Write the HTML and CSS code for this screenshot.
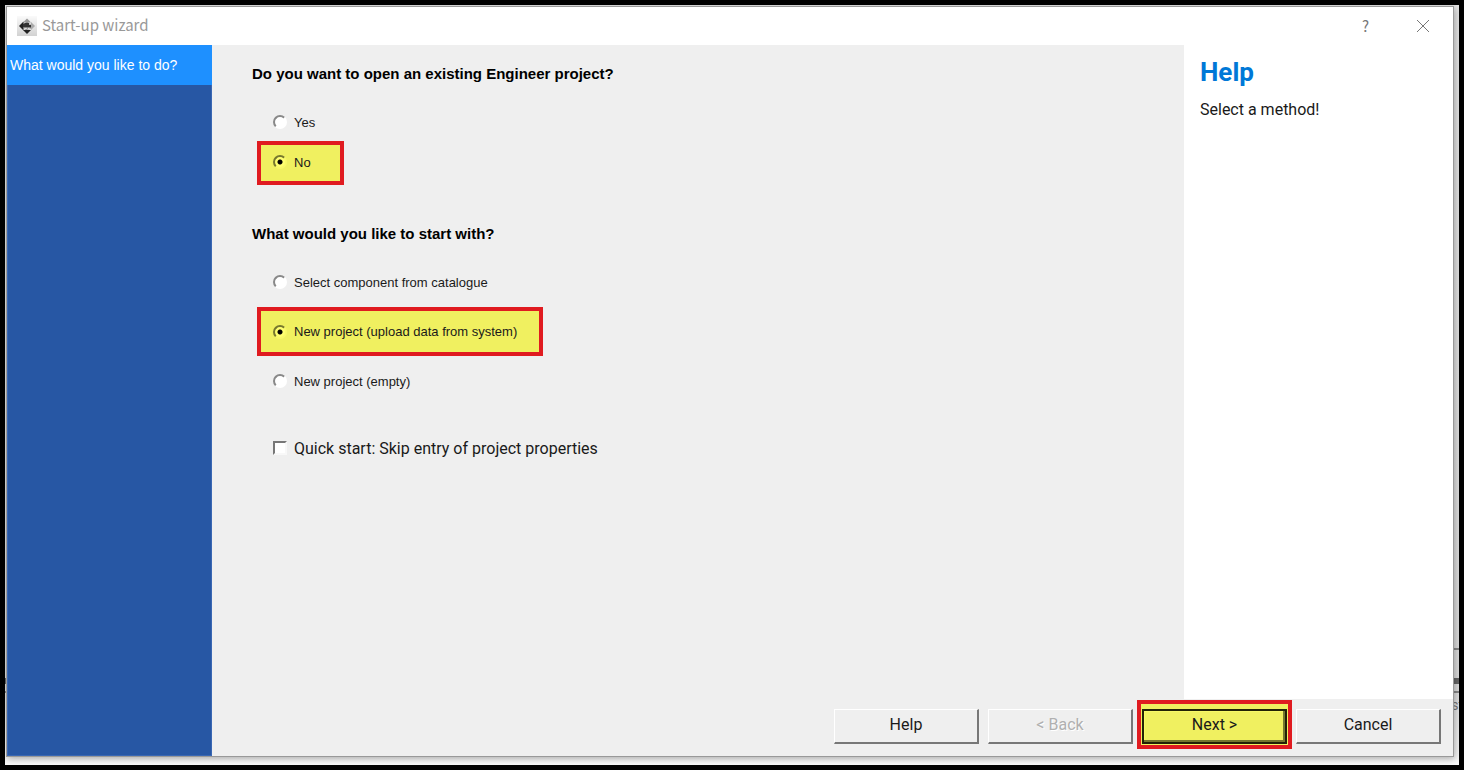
FILE: index.html
```html
<!DOCTYPE html>
<html lang="en">
<head>
<meta charset="utf-8">
<title>Start-up wizard</title>
<link rel="stylesheet" href="styles.css">
</head>
<body>
<div class="desktop">
  <div class="backdrop" aria-hidden="true">
    <span class="rule rule-top"></span>
    <span class="rule rule-thick"></span>
    <span class="rule rule-low"></span>
    <span class="backdrop-text">st</span>
  </div>
  <section class="window">
    <header class="titlebar">
      <svg class="app-icon" width="20" height="20" viewBox="0 0 20 20">
        <defs>
          <linearGradient id="tile" x1="0" y1="0" x2="0" y2="1">
            <stop offset="0" stop-color="#fafafa"/><stop offset="1" stop-color="#d2d2d2"/>
          </linearGradient>
        </defs>
        <rect width="20" height="20" fill="url(#tile)"/>
        <path d="M10 2.5 14 6.5H6z" fill="#999"/>
        <path d="M18 10 14 6v8z" fill="#aaa"/>
        <path d="M10 18 6 14h8z" fill="#222"/>
        <path d="M2 10 6.500 5.500v9z" fill="#222"/>
        <path d="M6 8q4-3 8 0v4q-4 3-8 0z" fill="#333"/>
        <path d="M6 11.500h5l-1.500 1.500h-2zM11 11.500h3l-2 2h-2z" fill="#ddd"/>
        <circle cx="13" cy="8" r="1" fill="#eee"/>
      </svg>
      <h1 class="title">Start-up wizard</h1>
      <button class="title-button" type="button" aria-label="Help topics">?</button>
      <button class="title-button" type="button" aria-label="Close">
        <svg width="12" height="12" viewBox="0 0 12 12"><path d="M0 0 12 12M12 0 0 12" stroke="#777" fill="none"/></svg>
      </button>
    </header>
    <div class="content">
      <nav class="steps">
        <a class="step" href="#start">What would you like to do?</a>
      </nav>
      <form class="wizard" id="start">
        <div class="questions">
          <fieldset class="group">
            <legend class="question">Do you want to open an existing Engineer project?</legend>
            <label class="option"><input class="radio" type="radio" name="open">Yes</label>
            <label class="option marked"><input class="radio" type="radio" name="open" checked>No</label>
          </fieldset>
          <fieldset class="group roomy">
            <legend class="question">What would you like to start with?</legend>
            <label class="option"><input class="radio" type="radio" name="source">Select component from catalogue</label>
            <label class="option marked"><input class="radio" type="radio" name="source" checked>New project (upload data from system)</label>
            <label class="option"><input class="radio" type="radio" name="source">New project (empty)</label>
          </fieldset>
          <label class="option quick"><input class="check" type="checkbox">Quick start: Skip entry of project properties</label>
        </div>
        <aside class="help">
          <h2 class="help-title">Help</h2>
          <p class="help-text">Select a method!</p>
        </aside>
        <footer class="actions">
          <button class="button first" type="button">Help</button>
          <button class="button" type="button" disabled>&lt; Back</button>
          <span class="marked-button"><button class="button default" type="button">Next &gt;</button></span>
          <button class="button" type="button">Cancel</button>
        </footer>
      </form>
    </div>
  </section>
</div>
</body>
</html>
```
FILE: styles.css
```css
* { box-sizing: border-box; }

body {
  margin: 0;
  background: #000;
  color: #1a1a1a;
  font-family: Roboto, "Liberation Sans", sans-serif;
  font-size: 16px;
}

.desktop {
  position: relative;
  display: flex;
  min-height: 100vh;
  padding: 6px 10px 13px 6px;
}

.backdrop {
  position: absolute;
  inset: 5px;
  overflow: hidden;
  background: linear-gradient(#e4e4e4, #dcdcdc 90%, #fafafa);
}

.rule { position: absolute; left: 0; right: 0; height: 2px; background: #888; }
.rule-top { left: auto; width: 8px; bottom: 115px; }
.rule-thick { bottom: 81px; height: 6px; background: #666; }
.rule-low { bottom: 72px; }
.backdrop-text { position: absolute; right: -4px; bottom: 52px; color: #777; font-size: 14px; }

.window {
  position: relative;
  display: flex;
  flex: 1;
  flex-direction: column;
  border: 1px solid #999;
  background: #fff;
  box-shadow: 1px 2px 7px rgba(0, 0, 0, .3);
}

.titlebar { display: flex; align-items: center; height: 38px; padding: 0 2px 0 10px; }
.title {
  flex: 1;
  margin: 0 0 0 5px;
  padding-bottom: 2px;
  color: #999;
  font: 400 15px/22px "Noto Sans CJK KR", sans-serif;
}
.title-button {
  display: grid;
  place-items: center;
  width: 57px;
  height: 38px;
  padding: 0;
  border: 0;
  background: none;
  color: #777;
  font: 400 15px/22px "Noto Sans CJK KR", sans-serif;
}

.content { display: flex; flex: 1; }
.steps { flex: 0 0 205px; border: 1px solid #3a68b4; border-top: 0; background: #2757a4; }
.step {
  display: block;
  margin: 0 -1px;
  padding: 0 3px;
  background: #1e90ff;
  color: #fff;
  font: 14px/40px "Liberation Sans", Arial, sans-serif;
  text-decoration: none;
}

.wizard {
  display: grid;
  flex: 1;
  grid-template: 1fr 57px / 1fr 269px;
  background: #efefef;
}
.questions { padding: 18px 40px; }
.group { min-width: 0; margin: 0 0 38px; padding: 0; border: 0; }
.question {
  padding: 0;
  color: #000;
  font: 700 15px/22px "Liberation Sans", Arial, sans-serif;
}
.group .option:first-of-type { margin-top: 18px; }
.group.roomy { margin: 0 0 22px; }
.group.roomy .option:first-of-type { margin-top: 12px; }

.option {
  display: flex;
  align-items: center;
  width: fit-content;
  height: 38px;
  margin-left: 5px;
  padding: 0 20px 0 16px;
  font: 13px "Liberation Sans", Arial, sans-serif;
}
.roomy .option { height: 50px; }
.option.marked { height: 44px; padding: 0 29px 2px 12px; border: 4px solid #e01b20; background: #f0f060; }
.roomy .option.marked { height: 49px; padding: 0 22px 0 12px; }
.quick { height: 40px; font: 16px Roboto, sans-serif; }

.radio, .check { appearance: none; flex: none; width: 14px; height: 14px; margin: 0 7px 0 0; }
.radio {
  border: 2px solid;
  border-color: #888 #fff #fff #888;
  border-radius: 50%;
  background: #fff;
}
.radio:checked {
  border-color: #77782e #f8f868 #f8f868 #77782e;
  background: radial-gradient(circle, #000 2px, #ffff70 3px);
}
.check { border: 2px solid; border-color: #777 #f8f8f8 #f8f8f8 #777; background: #fff; }

.help { padding: 12px 16px; background: #fff; }
.help-title { margin: 0 0 8px; color: #0078d7; font-size: 26px; font-weight: 700; line-height: 30px; }
.help-text { margin: 0; line-height: 30px; }

.actions {
  display: flex;
  grid-column: 1 / -1;
  align-items: flex-start;
  justify-content: flex-end;
  gap: 4px;
  padding: 1px 12px 0 0;
}
.button {
  width: 145px;
  height: 35px;
  margin-top: 9px;
  padding: 0 0 4px;
  border: 1px solid;
  border-width: 1px 2px 2px 1px;
  border-color: #fff #777 #777 #fff;
  background: #efefef;
  color: #1a1a1a;
  font: 16px Roboto, sans-serif;
}
.button.first { margin-right: 5px; }
.button:disabled { color: #b0b0b0; text-shadow: 1px 1px #fff; }
.marked-button { padding: 5px 1px 1px; border: 4px solid #e01b20; background: #f0f060; }
.button.default {
  display: block;
  margin: 0;
  border: 2px solid #222206;
  background: #f0f060;
  box-shadow: inset -2px -2px #77782e, inset 1px 1px #f8f868;
}
```
